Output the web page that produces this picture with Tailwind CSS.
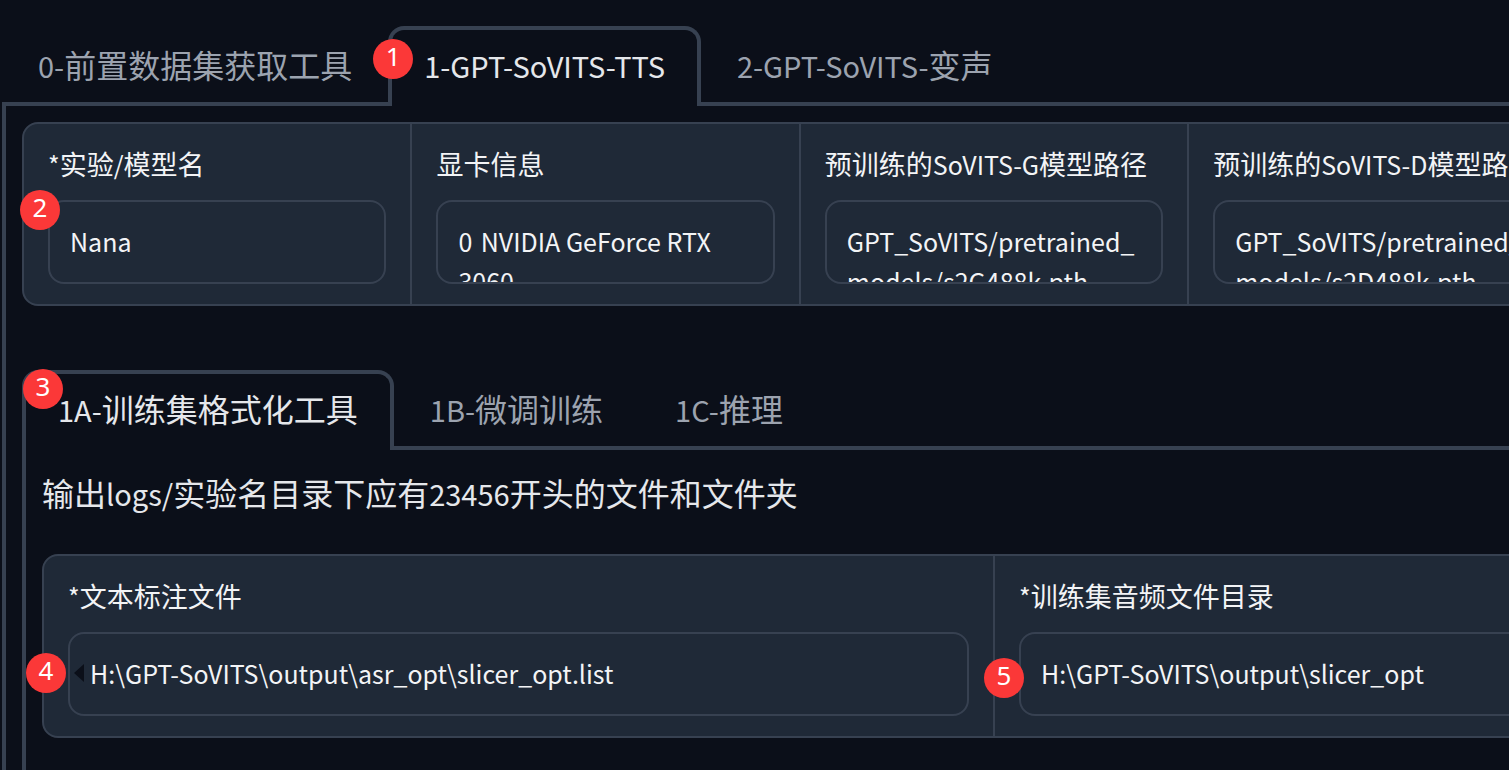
<!DOCTYPE html>
<html lang="zh-CN">
<head>
<meta charset="utf-8">
<title>GPT-SoVITS WebUI</title>
<script src="https://cdn.jsdelivr.net/npm/@tailwindcss/browser@4"></script>
</head>
<body class="bg-[#0b0f19] text-[#f3f4f6] font-['Noto_Sans_CJK_SC',sans-serif]">
<main class="relative min-h-screen overflow-hidden pt-[26px] pl-0.5">
  <div class="flex min-h-screen w-[calc(100%+479px)] flex-col">
    <nav role="tablist" class="flex border-b-4 border-[#374151] text-[32px] leading-[48px]">
      <button role="tab" class="-mb-1 border-4 border-transparent px-8 pt-2.5 pb-3.5 whitespace-nowrap text-[#9ca3af]"><span class="text-[29px] leading-none">0-</span>前置数据集获取工具</button>
      <div class="relative -mb-1">
        <button role="tab" aria-selected="true" class="block rounded-t-2xl border-4 border-b-0 border-[#374151] bg-[#0b0f19] px-8 pt-2.5 pb-[18px] whitespace-nowrap text-[#e5e7eb]"><span class="text-[29px] leading-none">1-GPT-SoVITS-TTS</span></button>
        <span class="absolute top-[13px] -left-[15px] size-10 rounded-full bg-[#fb3838] text-center font-['Noto_Sans',sans-serif] text-[26px] leading-[34px] text-white">1</span>
      </div>
      <button role="tab" class="-mb-1 border-4 border-transparent px-8 pt-2.5 pb-3.5 whitespace-nowrap text-[#9ca3af]"><span class="text-[29px] leading-none">2-GPT-SoVITS-</span>变声</button>
    </nav>

    <section role="tabpanel" class="flex grow flex-col border-x-4 border-[#374151] px-4 pt-4">
      <div class="relative">
        <div class="grid grid-cols-5 divide-x-2 divide-[#374151] overflow-hidden rounded-2xl border-2 border-[#374151] bg-[#1f2937] text-[27px]">
          <label class="block px-6 py-5">
            <span class="-mt-1 mb-2 block pb-1 leading-[48px] whitespace-nowrap"><span class="text-[25px] leading-none">*</span>实验<span class="text-[25px] leading-none">/</span>模型名</span>
            <textarea rows="1" class="block h-[84px] w-full resize-none overflow-hidden rounded-2xl border-2 border-[#374151] px-5 pt-[19px] text-[25px] leading-10">Nana</textarea>
          </label>
          <label class="block px-6 py-5">
            <span class="-mt-1 mb-2 block pb-1 leading-[48px] whitespace-nowrap">显卡信息</span>
            <textarea rows="1" class="block h-[84px] w-full resize-none overflow-hidden rounded-2xl border-2 border-[#374151] px-5 pt-[19px] text-[25px] leading-10">0&#9;NVIDIA GeForce RTX 3060</textarea>
          </label>
          <label class="block px-6 py-5">
            <span class="-mt-1 mb-2 block pb-1 leading-[48px] whitespace-nowrap">预训练的<span class="text-[25px] leading-none">SoVITS-G</span>模型路径</span>
            <textarea rows="1" class="block h-[84px] w-full resize-none overflow-hidden rounded-2xl border-2 border-[#374151] px-5 pt-[19px] text-[25px] leading-10 break-all">GPT_SoVITS/pretrained_models/s2G488k.pth</textarea>
          </label>
          <label class="block px-6 py-5">
            <span class="-mt-1 mb-2 block pb-1 leading-[48px] whitespace-nowrap">预训练的<span class="text-[25px] leading-none">SoVITS-D</span>模型路径</span>
            <textarea rows="1" class="block h-[84px] w-full resize-none overflow-hidden rounded-2xl border-2 border-[#374151] px-5 pt-[19px] text-[25px] leading-10 break-all">GPT_SoVITS/pretrained_models/s2D488k.pth</textarea>
          </label>
          <div></div>
        </div>
        <span class="absolute top-[68px] -left-0.5 size-10 rounded-full bg-[#fb3838] text-center font-['Noto_Sans',sans-serif] text-[26px] leading-[34px] text-white">2</span>
      </div>

      <nav role="tablist" class="mt-16 flex border-b-4 border-[#374151] text-[32px] leading-[48px]">
        <div class="relative -mb-1">
          <button role="tab" aria-selected="true" class="block rounded-t-2xl border-4 border-b-0 border-[#374151] bg-[#0b0f19] px-8 pt-2.5 pb-[18px] whitespace-nowrap text-[#e5e7eb]"><span class="text-[29px] leading-none">1A-</span>训练集格式化工具</button>
          <span class="absolute -top-px left-px size-10 rounded-full bg-[#fb3838] text-center font-['Noto_Sans',sans-serif] text-[26px] leading-[34px] text-white">3</span>
        </div>
        <button role="tab" class="-mb-1 border-4 border-transparent px-8 pt-2.5 pb-3.5 whitespace-nowrap text-[#9ca3af]"><span class="text-[29px] leading-none">1B-</span>微调训练</button>
        <button role="tab" class="-mb-1 border-4 border-transparent px-8 pt-2.5 pb-3.5 whitespace-nowrap text-[#9ca3af]"><span class="text-[29px] leading-none">1C-</span>推理</button>
      </nav>

      <div role="tabpanel" class="grow border-x-4 border-[#374151] px-4 pt-[18px]">
        <p class="text-[32px] leading-[48px] text-[#e5e7eb]">输出<span class="text-[29px] leading-none">logs/</span>实验名目录下应有<span class="text-[29px] leading-none">23456</span>开头的文件和文件夹</p>
        <div class="mt-[38px] grid grid-cols-2 divide-x-2 divide-[#374151] rounded-2xl border-2 border-[#374151] bg-[#1f2937] text-[27px]">
          <div class="relative px-6 py-5">
            <label for="list" class="-mt-1 mb-2 block pb-1 leading-[48px]"><span class="text-[25px] leading-none">*</span>文本标注文件</label>
            <textarea id="list" rows="1" class="block h-[84px] w-full resize-none overflow-hidden rounded-2xl border-2 border-[#374151] px-5 pt-[19px] text-[25px] leading-10">H:\GPT-SoVITS\output\asr_opt\slicer_opt.list</textarea>
            <svg class="absolute top-[108px] left-[30px] h-[18px] w-2.5" viewBox="0 0 10 18" fill="#0b0f19" aria-hidden="true"><path d="M0 9 10 0v18z"/></svg>
            <span class="absolute top-[97px] -left-[18px] size-10 rounded-full bg-[#fb3838] text-center font-['Noto_Sans',sans-serif] text-[26px] leading-[34px] text-white">4</span>
          </div>
          <div class="relative px-6 py-5">
            <label for="wavs" class="-mt-1 mb-2 block pb-1 leading-[48px]"><span class="text-[25px] leading-none">*</span>训练集音频文件目录</label>
            <textarea id="wavs" rows="1" class="block h-[84px] w-full resize-none overflow-hidden rounded-2xl border-2 border-[#374151] px-5 pt-[19px] text-[25px] leading-10">H:\GPT-SoVITS\output\slicer_opt</textarea>
            <span class="absolute top-[102px] -left-[11px] size-10 rounded-full bg-[#fb3838] text-center font-['Noto_Sans',sans-serif] text-[26px] leading-[34px] text-white">5</span>
          </div>
        </div>
      </div>
    </section>
  </div>
</main>
</body>
</html>
